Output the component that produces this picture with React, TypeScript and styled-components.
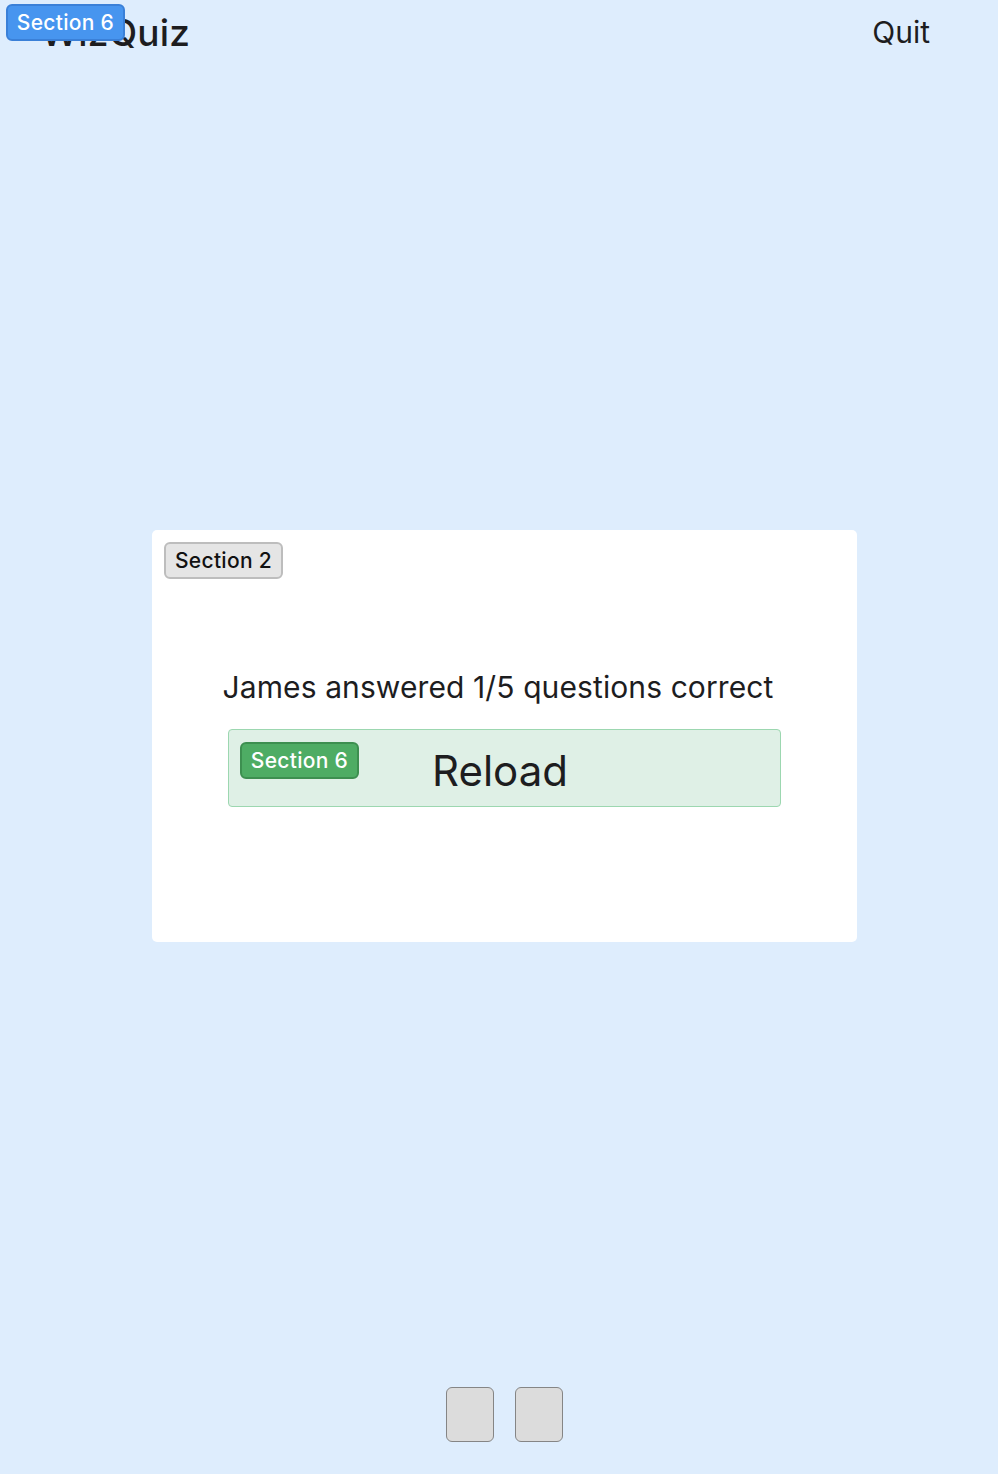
import styled, { createGlobalStyle } from 'styled-components';

const Global = createGlobalStyle`
    html, body {
        margin: 0;
        padding: 0;
        background-color: #deedfd;
        font-family: 'Inter', 'Noto Sans', sans-serif;
        color: #1d1d1f;
    }
`

const Page = styled.div`
    position: relative;
    min-height: 100vh;
    display: flex;
    flex-direction: column;
`

const Header = styled.header`
    height: 85px;
    display: flex;
    justify-content: space-between;
    align-items: flex-start;
    padding: 10px 68px 0 41px;
    box-sizing: border-box;
`

const Logo = styled.h1`
    margin: 0;
    font-size: 37px;
    font-weight: 500;
    letter-spacing: 0.2px;
`

const QuitButton = styled.button`
    border: none;
    background: none;
    padding: 0;
    margin-top: 4px;
    font-family: inherit;
    font-size: 30px;
    color: #1d1d1f;
    cursor: pointer;
`

const Main = styled.main`
    flex: 1;
    display: flex;
    align-items: center;
    justify-content: flex-start;
    padding-left: 152px;
`

const Card = styled.section`
    position: relative;
    width: 705px;
    height: 412px;
    background-color: #ffffff;
    border-radius: 5px;
    padding: 12px;
    box-sizing: border-box;
    display: flex;
    flex-direction: column;
    align-items: flex-start;
`

const Badge = styled.span<{ $tone: 'blue' | 'green' | 'grey' }>`
    display: inline-flex;
    align-items: center;
    justify-content: center;
    width: 119px;
    height: 37px;
    box-sizing: border-box;
    border-radius: 6px;
    font-size: 21px;
    font-weight: 500;
    letter-spacing: 0.3px;
    background-color: ${(p) => (p.$tone === 'blue' ? '#4795ef' : p.$tone === 'green' ? '#4eac64' : '#e5e5e5')};
    border: 2px solid ${(p) => (p.$tone === 'blue' ? '#3a80d8' : p.$tone === 'green' ? '#3d8f50' : '#bdbdbd')};
    color: ${(p) => (p.$tone === 'grey' ? '#111' : '#ffffff')};
`

const FloatingBadge = styled(Badge)`
    position: absolute;
    top: 4px;
    left: 6px;
`

const Result = styled.p`
    margin: 90px 0 0 0;
    align-self: stretch;
    padding-right: 13px;
    text-align: center;
    font-size: 30px;
    font-weight: 400;
    letter-spacing: 0.1px;
`

const ReloadBox = styled.div`
    margin: 24px 0 0 64px;
    width: 553px;
    height: 78px;
    box-sizing: border-box;
    padding: 12px 11px;
    background-color: #dff0e6;
    border: 1px solid #9cd7b0;
    border-radius: 4px;
    display: flex;
    align-items: flex-start;
`

const ReloadText = styled.span`
    margin-left: 73px;
    margin-top: 3px;
    font-size: 42px;
    font-weight: 400;
    line-height: 52px;
`

const Footer = styled.footer`
    height: 87px;
    display: flex;
    justify-content: center;
    align-items: flex-start;
    gap: 21px;
    padding-left: 11px;
    box-sizing: border-box;
`

const NavSquare = styled.button`
    width: 48px;
    height: 55px;
    background-color: #dcdcdc;
    border: 1px solid #858585;
    border-radius: 6px;
    padding: 0;
`

const App = () => {
    return (
        <Page>
            <Global />
            <Header>
                <Logo>WizQuiz</Logo>
                <QuitButton>Quit</QuitButton>
            </Header>
            <FloatingBadge $tone='blue'>Section 6</FloatingBadge>
            <Main>
                <Card>
                    <Badge $tone='grey'>Section 2</Badge>
                    <Result>James answered 1/5 questions correct</Result>
                    <ReloadBox>
                        <Badge $tone='green'>Section 6</Badge>
                        <ReloadText>Reload</ReloadText>
                    </ReloadBox>
                </Card>
            </Main>
            <Footer>
                <NavSquare />
                <NavSquare />
            </Footer>
        </Page>
    )
}

export default App;
